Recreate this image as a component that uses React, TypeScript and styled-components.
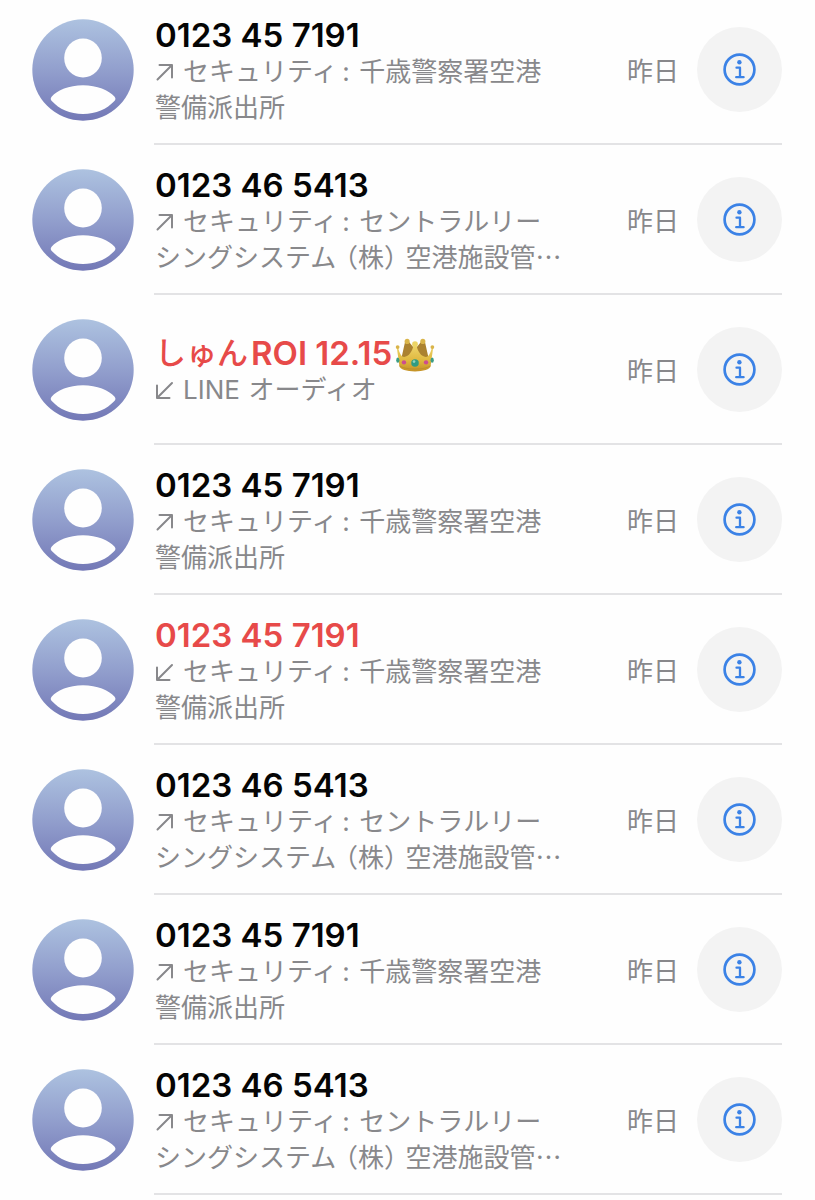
import React from "react";
import styled, { createGlobalStyle } from "styled-components";

const GlobalStyle = createGlobalStyle`
  *, *::before, *::after { box-sizing: border-box; }
  body {
    margin: 0;
    background: #fefefe;
    font-family: Inter, "Noto Sans CJK JP", sans-serif;
  }
`;

const Page = styled.main`
  overflow: hidden;
`;

const CallList = styled.ul`
  margin: -5px 0 0;
  padding: 0 33px 0 32px;
  list-style: none;
`;

const CallRow = styled.li`
  display: flex;
  align-items: center;
  gap: 20px;
`;

const AvatarIcon = styled.svg`
  flex: none;
  display: block;
  width: 102px;
  height: 102px;
`;

const Content = styled.div`
  flex: 1;
  min-width: 0;
  min-height: 150px;
  display: flex;
  align-items: center;
  padding: 1px 0 0 1px;
  border-bottom: 2px solid #e3e3e5;
`;

const Info = styled.div`
  flex: 1;
  min-width: 0;
  padding-top: 2px;
`;

const Caller = styled.h2<{ $missed: boolean }>`
  display: flex;
  align-items: center;
  margin: 0;
  font-size: 33px;
  line-height: 38px;
  font-weight: 600;
  white-space: pre;
  color: ${(p) => (p.$missed ? "#e74a49" : "#050505")};
`;

const Kana = styled.span`
  margin-right: 3px;
  font-size: 31px;
  font-weight: 500;
`;

const Detail = styled.p`
  max-width: 410px;
  margin: 0;
  font-size: 26px;
  line-height: 36px;
  font-feature-settings: "halt";
  color: #88888b;
`;

const ArrowIcon = styled.svg`
  width: 20px;
  height: 20px;
  margin-right: 8px;
  vertical-align: -1px;
`;

const CrownIcon = styled.svg`
  width: 40px;
  height: 34px;
  margin: 4px 0 0 3px;
`;

const CallDate = styled.time`
  flex: none;
  margin: 0 18px 0 12px;
  padding-top: 4px;
  font-size: 26px;
  line-height: 36px;
  color: #88888b;
`;

const InfoButton = styled.button`
  flex: none;
  display: grid;
  place-items: center;
  width: 85px;
  height: 85px;
  padding: 0;
  border: 0;
  border-radius: 50%;
  background: #f3f3f3;
  color: #3b82e6;
  cursor: pointer;
`;

function Avatar({ id }: { id: string }) {
  return (
    <AvatarIcon viewBox="0 0 102 102" aria-hidden="true">
      <defs>
        <linearGradient id={id} x1="0" y1="0" x2="0" y2="1">
          <stop offset="0" stopColor="#adc2e0" />
          <stop offset="0.5" stopColor="#929fcd" />
          <stop offset="1" stopColor="#7378b6" />
        </linearGradient>
      </defs>
      <circle cx="51" cy="51" r="50.7" fill={`url(#${id})`} />
      <ellipse cx="51" cy="39" rx="18.8" ry="19.6" fill="#fefefe" />
      <path
        d="M19.8 77.5C25 71.5 37 66.3 51 66.3s26 5.2 31.4 11.2c1.400 1.600 1.400 3 0 4.500C75 90 64 95 51 95s-24-5-31.200-13c-1.400-1.500-1.400-3 0-4.500z"
        fill="#fefefe"
      />
    </AvatarIcon>
  );
}

function Arrow({ outgoing }: { outgoing: boolean }) {
  return (
    <ArrowIcon
      viewBox="0 0 20 20"
      fill="none"
      stroke="currentColor"
      strokeWidth="2"
      strokeLinecap="round"
      strokeLinejoin="round"
      role="img"
      aria-label={outgoing ? "発信" : "着信"}
    >
      <path d={outgoing ? "M2.500 17.500 17 3M4.500 3H17v12.500" : "M17 3 2 18M2 5.500V18h12.500"} />
    </ArrowIcon>
  );
}

function Crown() {
  return (
    <CrownIcon viewBox="0 0 42 36" role="img" aria-label="王冠">
      <defs>
        <linearGradient id="crown-gold" x1="0" y1="0" x2="0" y2="1">
          <stop offset="0" stopColor="#efd66c" />
          <stop offset="0.6" stopColor="#dfb73e" />
          <stop offset="1" stopColor="#c49125" />
        </linearGradient>
      </defs>
      <path d="M6 24 10.500 4h4L21 12 27.500 4h4L36 24 21 28z" fill="#ab8230" />
      <path
        d="M1.800 10.500 3 9.500C4.500 16 6.500 20 9.500 20c5 0 9-6 10-13h3c1 7 5 13 10 13 3 0 5-4 6.500-10.500l1.200 1L37.500 30c-.3 3-8 5.500-16.500 5.500S4.800 33 4.500 30z"
        fill="url(#crown-gold)"
      />
      <path d="M4.600 29.500C10 34 32 34 37.400 29.500" fill="none" stroke="#bd8f2b" strokeWidth="1" />
      <g fill="#d9b449">
        <circle cx="2.600" cy="9.600" r="2" />
        <circle cx="12.700" cy="3.600" r="2.700" />
        <circle cx="21" cy="6.500" r="3" fill="#edd565" />
        <circle cx="29.300" cy="3.600" r="2.700" />
        <circle cx="39.400" cy="9.600" r="2" />
      </g>
      <ellipse cx="2.800" cy="23.500" rx="1.700" ry="2.800" fill="#3c9d86" />
      <ellipse cx="39.200" cy="23.500" rx="1.700" ry="2.800" fill="#3c9d86" />
      <circle cx="9.300" cy="25.800" r="2.300" fill="#cc4c91" />
      <circle cx="32.700" cy="25.800" r="2.300" fill="#cc4c91" />
      <circle cx="21" cy="26.500" r="4" fill="#319b82" />
      <circle cx="20" cy="25" r="1.400" fill="#8fd5c0" />
    </CrownIcon>
  );
}

function InfoGlyph() {
  return (
    <svg width="33" height="33" viewBox="0 0 33 33" fill="none" stroke="currentColor" aria-hidden="true">
      <circle cx="16.500" cy="16.500" r="14.900" strokeWidth="2.700" />
      <circle cx="16.400" cy="9.200" r="2.200" fill="currentColor" stroke="none" />
      <path d="M13.500 14.700h3.500v9.500M13.200 24.200h7.400" strokeWidth="2.300" strokeLinecap="round" strokeLinejoin="round" />
    </svg>
  );
}

type Call = {
  kana?: string;
  caller: string;
  crowned?: boolean;
  missed?: boolean;
  detail: string;
};

const police = "セキュリティ\u2009: \u200a千歳警察署空港警備派出所";
const leasing = "セキュリティ\u2009: \u200aセントラルリーシングシステム\u2004（株）\u2004空港施設管⋯";

const calls: Call[] = [
  { caller: "0123 45 7191", detail: police },
  { caller: "0123 46 5413", detail: leasing },
  { kana: "しゅん", caller: "ROI 12.15", crowned: true, missed: true, detail: "LINE\u2004オーディオ" },
  { caller: "0123 45 7191", detail: police },
  { caller: "0123 45 7191", missed: true, detail: police },
  { caller: "0123 46 5413", detail: leasing },
  { caller: "0123 45 7191", detail: police },
  { caller: "0123 46 5413", detail: leasing },
];

export default function App() {
  return (
    <Page lang="ja">
      <GlobalStyle />
      <CallList>
        {calls.map((call, i) => (
          <CallRow key={i}>
            <Avatar id={`avatar-${i}`} />
            <Content>
              <Info>
                <Caller $missed={!!call.missed}>
                  {call.kana && <Kana>{call.kana}</Kana>}
                  {call.caller}
                  {call.crowned && <Crown />}
                </Caller>
                <Detail>
                  <Arrow outgoing={!call.missed} />
                  {call.detail}
                </Detail>
              </Info>
              <CallDate>昨日</CallDate>
              <InfoButton type="button" aria-label={`${call.kana ?? ""}${call.caller}の詳細`}>
                <InfoGlyph />
              </InfoButton>
            </Content>
          </CallRow>
        ))}
      </CallList>
    </Page>
  );
}
